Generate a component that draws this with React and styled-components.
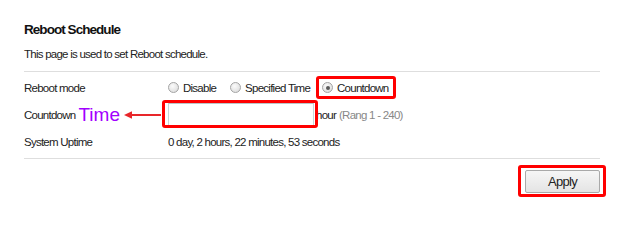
import styled, { createGlobalStyle } from "styled-components";

const GlobalStyle = createGlobalStyle`
  html, body {
    margin: 0;
    padding: 0;
    background: #fff;
  }
  body {
    font-family: "Liberation Sans", Arial, sans-serif;
    font-size: 11.5px;
    letter-spacing: -0.75px;
    color: #222;
  }
`;

const Page = styled.div`
  width: 576px;
  padding: 21px 0 0 24px;
`;

const Title = styled.h1`
  margin: 0;
  font-size: 13.5px;
  letter-spacing: -0.95px;
  line-height: 18px;
  font-weight: bold;
  color: #111;
`;

const Intro = styled.p`
  margin: 7px 0 0;
  line-height: 16px;
`;

const Divider = styled.div`
  height: 1px;
  background: #dedede;
  margin-top: ${(p) => p.$top || 0}px;
`;

const Form = styled.div`
  padding: 2px 0 3px;
`;

const Row = styled.div`
  display: grid;
  grid-template-columns: 144px 1fr;
  align-items: center;
  height: 27px;
`;

const Label = styled.div`
  display: flex;
  align-items: center;
  height: 100%;
  white-space: nowrap;
`;

const Value = styled.div`
  display: flex;
  align-items: center;
  white-space: nowrap;
`;

const Highlight = styled.span`
  position: relative;
  display: inline-flex;
  align-items: center;
  vertical-align: top;

  &::after {
    content: "";
    position: absolute;
    top: ${(p) => p.$t}px;
    right: ${(p) => p.$r}px;
    bottom: ${(p) => p.$b}px;
    left: ${(p) => p.$l}px;
    border: 3px solid #f00;
    border-radius: 3px;
    pointer-events: none;
    z-index: 1;
  }
`;

const Option = styled.label`
  display: inline-flex;
  align-items: center;
  gap: 4px;
  margin-right: ${(p) => p.$gap || 0}px;
  line-height: 14px;
`;

const RadioDot = styled.span`
  width: 9px;
  height: 9px;
  border-radius: 50%;
  border: 1px solid #a4a4a4;
  background: radial-gradient(circle at 40% 35%, #fbfbfb 0%, #e2e2e2 70%, #d2d2d2 100%);
  display: inline-flex;
  align-items: center;
  justify-content: center;

  &::before {
    content: "";
    width: 4px;
    height: 4px;
    border-radius: 50%;
    background: ${(p) => (p.$on ? "#5a5a5a" : "transparent")};
  }
`;

const TextInput = styled.input`
  box-sizing: border-box;
  display: block;
  width: 146px;
  height: 23px;
  margin: 0;
  border: 1px solid #c8d6d8;
  border-top-color: #b9c6c8;
  padding: 0 4px;
  font: inherit;
  background: #fff;
  outline: none;
`;

const Unit = styled.span`
  margin-left: 2px;
`;

const Hint = styled.span`
  color: #888;
  margin-left: 3px;
`;

const TimeNote = styled.span`
  font-size: 19px;
  letter-spacing: 0;
  line-height: 20px;
  color: #a200ff;
  margin-left: 3px;
`;

const Arrow = styled.svg`
  margin-left: 4px;
  flex: none;
`;

const Actions = styled.div`
  display: flex;
  justify-content: flex-end;
  padding: 11px 0 10px;
`;

const Button = styled.button`
  box-sizing: border-box;
  display: block;
  width: 75px;
  height: 23px;
  border: 1px solid #a9a9a9;
  border-radius: 2px;
  background: linear-gradient(#f6f6f6, #e4e4e4);
  font-family: inherit;
  font-size: 13px;
  letter-spacing: -0.7px;
  color: #222;
  padding: 0;
`;

const Radio = ({ label, on, gap }) => (
  <Option $gap={gap}>
    <RadioDot $on={on} />
    {label}
  </Option>
);

export default function App() {
  return (
    <>
      <GlobalStyle />
      <Page>
        <Title>Reboot Schedule</Title>
        <Intro>This page is used to set Reboot schedule.</Intro>
        <Divider $top={9} />
        <Form>
          <Row>
            <Label>Reboot mode</Label>
            <Value>
              <Radio label="Disable" gap={14} />
              <Radio label="Specified Time" gap={12} />
              <Highlight $t={-5} $r={-8} $b={-4} $l={-6}>
                <Radio label="Countdown" on />
              </Highlight>
            </Value>
          </Row>
          <Row>
            <Label>
              Countdown
              <TimeNote>Time</TimeNote>
              <Arrow width="38" height="10" viewBox="0 0 38 10">
                <path d="M7 5 H37" stroke="#e8262a" strokeWidth="2" />
                <path d="M0 5 L8 1.2 L8 8.8 Z" fill="#e8262a" />
              </Arrow>
            </Label>
            <Value>
              <Highlight $t={-3} $r={-4} $b={-2} $l={-6}>
                <TextInput defaultValue="" />
              </Highlight>
              <Unit>hour</Unit>
              <Hint>(Rang 1 - 240)</Hint>
            </Value>
          </Row>
          <Row>
            <Label>System Uptime</Label>
            <Value>0 day, 2 hours, 22 minutes, 53 seconds</Value>
          </Row>
        </Form>
        <Divider />
        <Actions>
          <Highlight $t={-5} $r={-6} $b={-4} $l={-7}>
            <Button>Apply</Button>
          </Highlight>
        </Actions>
      </Page>
    </>
  );
}
